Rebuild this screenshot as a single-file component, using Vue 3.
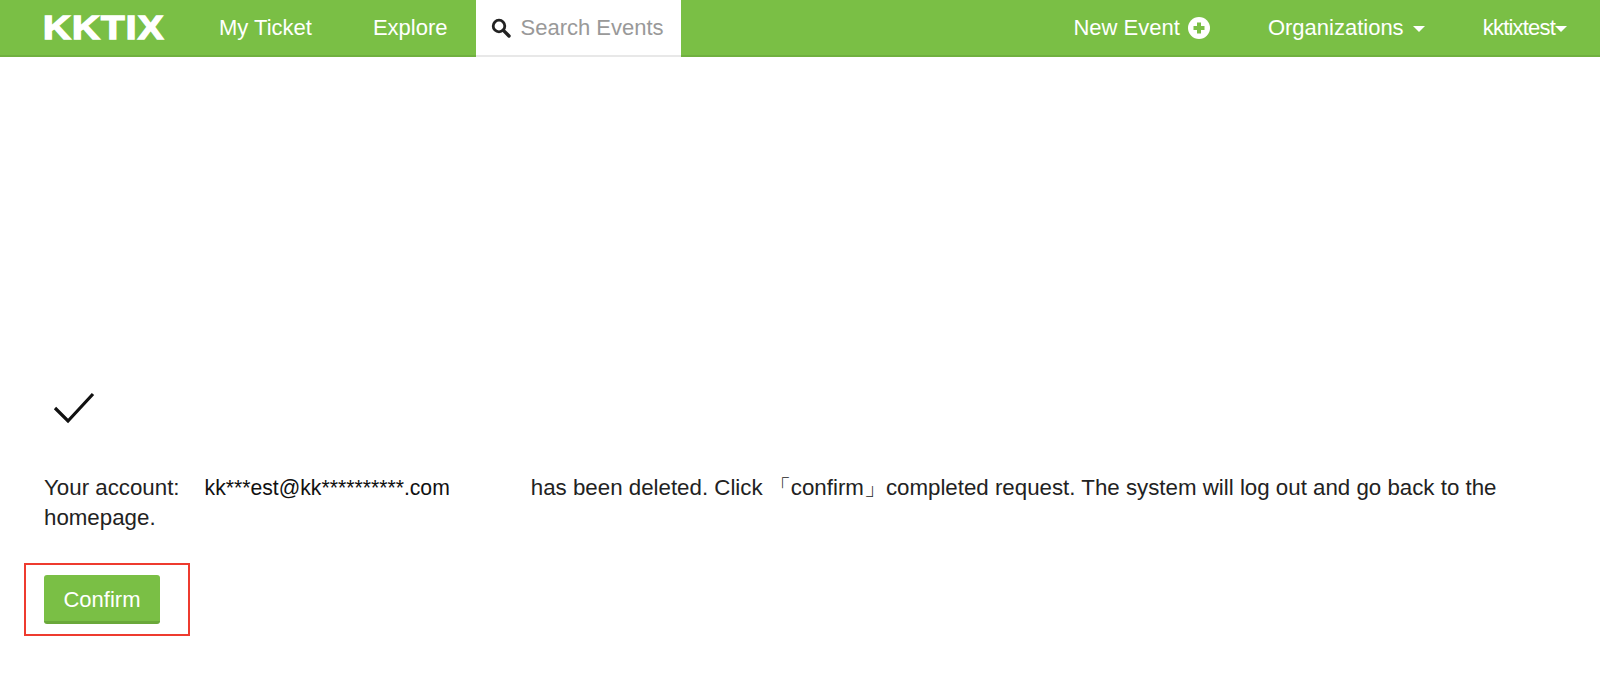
<template>
  <div class="page">
    <!-- barra superior -->
    <nav class="navbar">
      <a class="brand"><span>KKTIX</span></a>
      <a class="nav-link my-ticket">My Ticket</a>
      <a class="nav-link explore">Explore</a>
      <div class="search">
        <svg class="search-icon" viewBox="0 0 20 20" width="20" height="20">
          <circle cx="8" cy="8" r="5.8" fill="none" stroke="#222" stroke-width="2.8" />
          <path d="M12.4 12.4 L18 18" stroke="#222" stroke-width="3.4" stroke-linecap="round" />
        </svg>
        <span>Search Events</span>
      </div>
      <div class="nav-right">
        <a class="nav-link new-event">
          New Event
          <svg class="plus" viewBox="0 0 22 22" width="22" height="22">
            <circle cx="11" cy="11" r="11" fill="#fff" />
            <path d="M11 5.5 V16.5 M5.5 11 H16.5" stroke="#7abf45" stroke-width="4" />
          </svg>
        </a>
        <a class="nav-link orgs">Organizations <i class="caret"></i></a>
        <a class="nav-link user"><span class="user-name">kktixtest</span><i class="caret tight"></i></a>
      </div>
    </nav>

    <main class="content">
      <svg class="check" viewBox="0 0 42 32" width="42" height="32">
        <path d="M2 16 L15 29 L40 2" fill="none" stroke="#111" stroke-width="3.2" />
      </svg>
      <p class="message">
        Your account:<span class="email">kk***est@kk**********.com</span>has been deleted. Click 「confirm」completed request. The system will log out and go back to the<br />homepage.
      </p>
      <div class="highlight">
        <button class="confirm">Confirm</button>
      </div>
    </main>
  </div>
</template>

<script setup>
</script>

<style>
body { background: #fff; }
</style>

<style scoped>
.page {
  font-family: "Liberation Sans", Arial, sans-serif;
  color: #222;
}

.navbar {
  display: flex;
  align-items: center;
  height: 55px;
  padding-left: 44px;
  background: #7abf45;
  border-bottom: 2px solid #70b03f;
  color: #fff;
  font-size: 22px;
}

.brand { width: 119px; margin-left: -1px; }

/* el logo es mas ancho que la fuente */
.brand span {
  display: inline-block;
  font-size: 33px;
  font-weight: 700;
  letter-spacing: 1px;
  -webkit-text-stroke: 1.4px #fff;
  transform: scaleX(1.17);
  transform-origin: left center;
}

.nav-link { color: #fff; white-space: nowrap; }
.my-ticket { margin-left: 57px; }
.explore { margin-left: 61px; }

.search {
  display: flex;
  align-items: center;
  gap: 10px;
  align-self: stretch;
  width: 205px;
  margin-left: 28px;
  margin-bottom: -2px;
  padding-left: 15px;
  box-sizing: border-box;
  background: #fff;
  border-bottom: 2px solid #e8e8e8;
  color: #999;
}

.nav-right {
  display: flex;
  align-items: center;
  margin-left: auto;
  padding-right: 33px;
}

.new-event { display: flex; align-items: center; gap: 8px; }
.orgs { margin-left: 58px; }
.user { margin-left: 58px; }
.user-name { letter-spacing: -0.8px; }

.caret {
  display: inline-block;
  margin-left: 3px;
  vertical-align: middle;
  border-top: 6px solid #fff;
  border-left: 6px solid transparent;
  border-right: 6px solid transparent;
}
.caret.tight { margin-left: 0; }

.content { padding: 0 44px; }

.check {
  display: block;
  margin: 335px 0 0 9px;
}

.message {
  margin: 49px 0 0;
  font-size: 22.3px;
  line-height: 30px;
  color: #222;
}

.email {
  margin: 0 81px 0 25px;
  font-size: 21.2px;
  color: #111;
}

/* recuadro rojo de la captura */
.highlight {
  width: fit-content;
  margin: 30px 0 0 -20px;
  padding: 10px 28px 10px 18px;
  border: 2px solid #ee3b2f;
}

.confirm {
  display: block;
  width: 116px;
  height: 49px;
  padding: 4px 0 0;
  border: none;
  border-bottom: 3px solid #6aa83a;
  border-radius: 3px;
  background: #7abf45;
  color: #fff;
  font-family: inherit;
  font-size: 22px;
}
</style>
